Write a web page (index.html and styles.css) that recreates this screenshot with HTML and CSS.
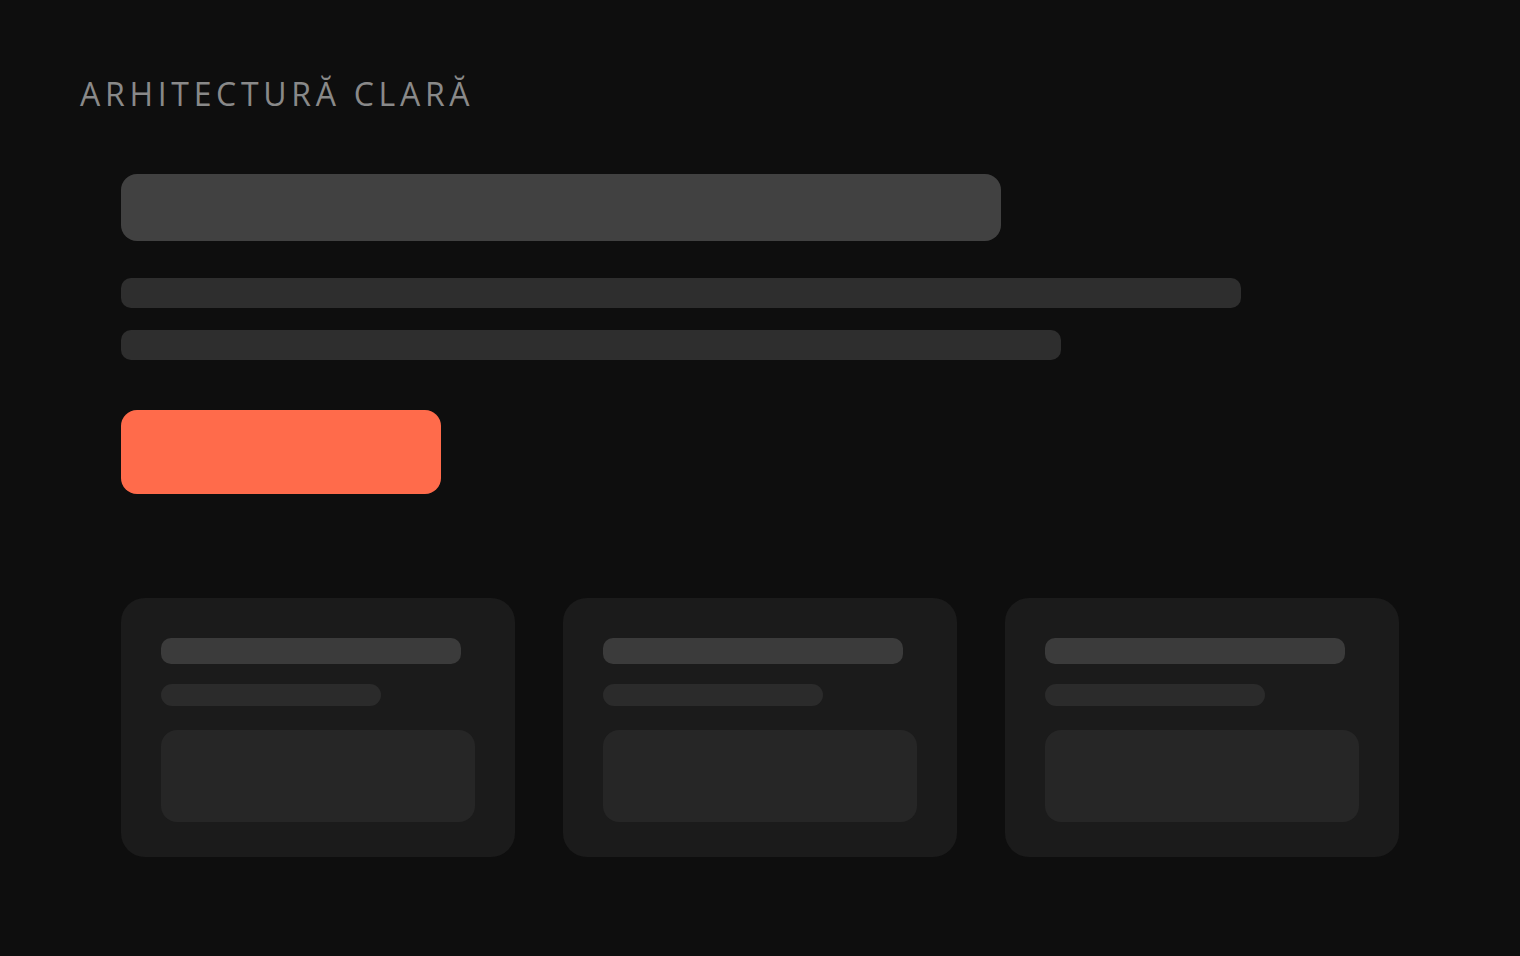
FILE: index.html
```html
<!DOCTYPE html>
<html lang="ro">
<head>
  <meta charset="UTF-8">
  <title>Arhitectură clară</title>
  <link rel="stylesheet" href="styles.css">
</head>
<body>
  <div class="page">
    <h1 class="eyebrow">Arhitectură clară</h1>

    <section class="hero">
      <div class="hero-title"></div>
      <div class="hero-line wide"></div>
      <div class="hero-line"></div>
      <div class="hero-cta"></div>
    </section>

    <section class="cards">
      <div class="card">
        <div class="card-title"></div>
        <div class="card-meta"></div>
        <div class="card-body"></div>
      </div>
      <div class="card">
        <div class="card-title"></div>
        <div class="card-meta"></div>
        <div class="card-body"></div>
      </div>
      <div class="card">
        <div class="card-title"></div>
        <div class="card-meta"></div>
        <div class="card-body"></div>
      </div>
    </section>
  </div>
</body>
</html>
```

FILE: styles.css
```css
:root {
  --bg: #0e0e0e;
  --accent: #ff6b4b;
}

html, body {
  margin: 0;
  height: 100%;
}

body {
  background: var(--bg);
  font-family: 'Open Sans', 'Noto Sans', sans-serif;
}

.page {
  padding: 74px 80px;
}

.eyebrow {
  margin: 0;
  font-size: 32px;
  line-height: 40px;
  font-weight: 400;
  letter-spacing: 4.7px;
  text-transform: uppercase;
  color: #898989;
}

/* hero placeholder block */
.hero {
  margin: 60px 0 0 41px;
}

.hero-title {
  width: 880px;
  height: 67px;
  background: #414141;
  border-radius: 16px;
}

.hero-line {
  width: 940px;
  height: 30px;
  margin-top: 22px;
  background: #2e2e2e;
  border-radius: 10px;
}

.hero-line.wide {
  width: 1120px;
  margin-top: 37px;
}

.hero-cta {
  width: 320px;
  height: 84px;
  margin-top: 50px;
  background: var(--accent);
  border-radius: 16px;
}

/* three cards row */
.cards {
  display: flex;
  gap: 48px;
  margin: 104px 0 0 41px;
}

.card {
  width: 394px;
  height: 259px;
  box-sizing: border-box;
  padding: 40px;
  background: #1b1b1b;
  border-radius: 24px;
}

.card-title {
  width: 300px;
  height: 26px;
  background: #3b3b3b;
  border-radius: 10px;
}

.card-meta {
  width: 220px;
  height: 22px;
  margin-top: 20px;
  background: #2b2b2b;
  border-radius: 11px;
}

.card-body {
  height: 92px;
  margin-top: 24px;
  background: #262626;
  border-radius: 16px;
}
```
